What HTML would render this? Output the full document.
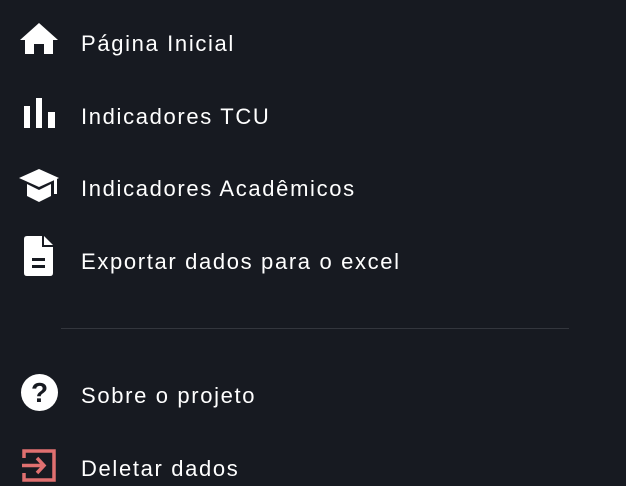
<!DOCTYPE html>
<html><head><style>
body{margin:0;width:626px;height:486px;background:#171a21;overflow:hidden;font-family:"Liberation Sans",sans-serif;color:#fff;position:relative}
.t{position:absolute;left:81px;font-size:22px;line-height:24px;letter-spacing:1.65px;white-space:nowrap}
svg{position:absolute}
.hr{position:absolute;left:61px;width:508px;top:328px;height:1px;background:#33363d}
</style></head><body>
<svg style="left:20px;top:23px" width="38" height="32" viewBox="0 0 38 32"><path d="M19 0 L38 17 L33 17 L33 31 L24 31 L24 21 L14 21 L14 31 L5 31 L5 17 L0 17 Z" fill="#fff"/></svg>
<div class="t" style="top:32px">Página Inicial</div>

<svg style="left:24px;top:98px" width="31" height="30"><rect x="0" y="8" width="6" height="22" fill="#fff"/><rect x="12" y="0" width="6" height="30" fill="#fff"/><rect x="24" y="14" width="7" height="16" fill="#fff"/></svg>
<div class="t" style="top:105px">Indicadores TCU</div>

<svg style="left:19px;top:169px" width="41" height="34" viewBox="0 0 41 34"><path d="M20 0 L40 9 L20 18 L0 9 Z" fill="#fff"/><path d="M8 15 L20 21 L32 15 L32 27 L20 33 L8 27 Z" fill="#fff"/><rect x="35" y="10" width="3" height="15" fill="#fff"/></svg>
<div class="t" style="top:177px">Indicadores Acadêmicos</div>

<svg style="left:24px;top:236px" width="30" height="41" viewBox="0 0 30 41"><path d="M3 0 H18 V11 H29 V37 Q29 40 26 40 H3 Q0 40 0 37 V3 Q0 0 3 0 Z" fill="#fff"/><path d="M20 0 L29 9 H20 Z" fill="#fff"/><rect x="8" y="22" width="13" height="3" fill="#171a21"/><rect x="8" y="29" width="13" height="3" fill="#171a21"/></svg>
<div class="t" style="top:250px">Exportar dados para o excel</div>

<div class="hr"></div>

<svg style="left:21px;top:374px" width="37" height="37" viewBox="0 0 37 37"><circle cx="18.5" cy="18.5" r="18.5" fill="#fff"/><text x="18.5" y="28" font-family="Liberation Sans" font-weight="bold" font-size="28" text-anchor="middle" fill="#171a21">?</text></svg>
<div class="t" style="top:384px">Sobre o projeto</div>

<svg style="left:22px;top:449px" width="34" height="33" viewBox="0 0 34 33" fill="none" stroke="#e07070" stroke-width="3.5"><path d="M2 9 V2 H32 V31 H2 V24"/><path d="M0 16.5 H22 M15 9 L22 16.5 L15 24"/></svg>
<div class="t" style="top:457px">Deletar dados</div>
</body></html>
